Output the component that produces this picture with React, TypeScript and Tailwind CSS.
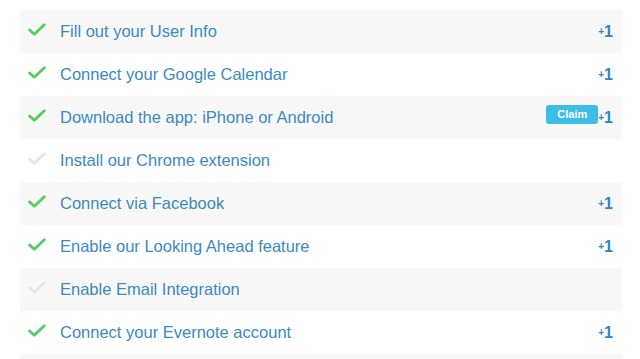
const tasks = [
  { label: "Fill out your User Info", done: true },
  { label: "Connect your Google Calendar", done: true },
  { label: "Download the app: iPhone or Android", done: true, claim: true },
  { label: "Install our Chrome extension", done: false },
  { label: "Connect via Facebook", done: true },
  { label: "Enable our Looking Ahead feature", done: true },
  { label: "Enable Email Integration", done: false },
  { label: "Connect your Evernote account", done: true },
  { label: "", done: false, empty: true },
];

function Check({ done }: { done: boolean }) {
  return (
    <svg width="18" height="14" viewBox="0 0 18 14" className="-mt-[3px] shrink-0">
      <path
        d="M1.6 7 L6.3 11.3 L16.3 1.8"
        fill="none"
        stroke={done ? "#4fcf5f" : "#e6e6e6"}
        strokeWidth="2.8"
        strokeLinecap="round"
        strokeLinejoin="round"
      />
    </svg>
  );
}

export default function App() {
  return (
    <div
      className="h-[359px] w-[640px] overflow-hidden bg-white pt-[10px]"
      style={{ fontFamily: '"Liberation Sans", Arial, sans-serif' }}
    >
      <ul className="ml-[20px] w-[602px]">
        {tasks.map((task, i) => (
          <li
            key={i}
            className={`flex h-[43px] items-center pl-[8px] pr-[9px] ${
              i % 2 === 0 ? "bg-[#f8f8f8]" : "bg-white"
            }`}
          >
            {!task.empty && (
              <>
                <Check done={task.done} />
                <span className="ml-[14px] text-[16.5px] text-[#3b8ac0]">
                  {task.label}
                </span>
                <div className="ml-auto flex items-center">
                  {task.claim && (
                    <span className="-mt-[6px] rounded-[3px] bg-[#3bbde6] px-[11px] py-[3px] text-[11px] font-bold leading-[13px] text-white">
                      Claim
                    </span>
                  )}
                  {(task.done || task.claim) && (
                    <span className="flex items-center font-bold text-[#2f86c0]">
                      <span className="text-[10px]">+</span>
                      <span className="text-[16px]">1</span>
                    </span>
                  )}
                </div>
              </>
            )}
          </li>
        ))}
      </ul>
    </div>
  );
}
